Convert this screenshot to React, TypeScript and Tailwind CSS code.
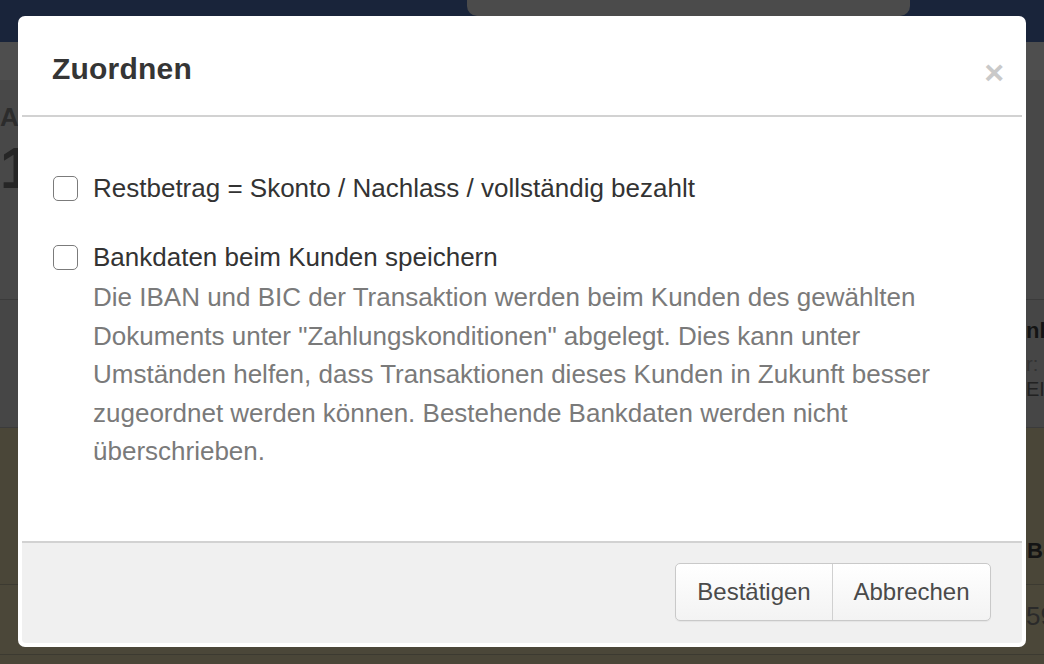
export default function App() {
  const font = { fontFamily: '"Liberation Sans", Arial, Helvetica, sans-serif' };

  return (
    <div className="relative w-[1044px] h-[664px] overflow-hidden bg-[#4a4638]" style={font}>
      {/* page behind the overlay */}
      <div className="flex flex-col">
        <div className="h-[42px] bg-[#19243a]">
          <div className="ml-[467px] w-[443px] h-[16px] bg-[#4b4b4b] rounded-b-[10px]" />
        </div>
        <div className="h-[38px] bg-[#4e4e4e]" />
        <div className="h-[220px] bg-[#484848] border-b border-[#3b3b3b] flex flex-col">
          <span className="mt-[26px] text-[26px] leading-[22px] font-bold text-[#2c2c2c]">A</span>
          <span className="mt-[14px] text-[58px] leading-[52px] font-bold text-[#262626]">1</span>
        </div>
        <div className="h-[128px] bg-[#464646] border-b border-[#3b3b3b] flex">
          <div className="ml-[1026px] flex flex-col whitespace-nowrap">
            <span className="mt-[20px] text-[22px] leading-[22px] font-bold text-[#141414]">nl</span>
            <span className="mt-[12px] text-[20px] leading-[20px] text-[#333]">r:</span>
            <span className="mt-[5px] text-[20px] leading-[20px] text-[#222]">EI</span>
          </div>
        </div>
        <div className="h-[157px] bg-[#4a4638] border-b border-[#3c3a31] flex">
          <span className="ml-[1027px] mt-[112px] text-[22px] leading-[22px] font-bold text-[#141414] whitespace-nowrap">
            Be
          </span>
        </div>
        <div className="h-[70px] bg-[#4b4739] border-b border-[#3c3a31] flex">
          <span className="ml-[1026px] mt-[18px] text-[26px] leading-[26px] text-[#2a2a2a] whitespace-nowrap">
            59
          </span>
        </div>
      </div>

      {/* modal */}
      <div className="absolute left-[18px] top-[16px] w-[1008px] h-[631px] bg-white rounded-[7px] p-[4px] flex flex-col">
        <div className="h-[97px] shrink-0 border-b-2 border-[#d2d2d2] flex items-center justify-between pl-[30px] pr-[18px]">
          <h1 className="text-[30px] font-bold text-[#353535] mt-[2px] tracking-[0.2px]">Zuordnen</h1>
          <span className="text-[34px] leading-none font-bold text-[#c9c9c9] mt-[8px]">×</span>
        </div>

        <div className="flex-1 pl-[31px] pt-[52px]">
          <label className="flex items-start">
            <span className="mt-[7px] w-[25px] h-[25px] shrink-0 rounded-[5px] border-[1.5px] border-[#7b7b7b] bg-white" />
            <span className="ml-[15px] text-[26px] leading-[38.5px] text-[#333]">
              Restbetrag = Skonto / Nachlass / vollständig bezahlt
            </span>
          </label>

          <label className="flex items-start mt-[30px]">
            <span className="mt-[7px] w-[25px] h-[25px] shrink-0 rounded-[5px] border-[1.5px] border-[#7b7b7b] bg-white" />
            <div className="ml-[15px] w-[870px]">
              <div className="text-[26px] leading-[38.5px] text-[#333]">Bankdaten beim Kunden speichern</div>
              <p className="mt-[2px] text-[26px] leading-[38.6px] text-[#7a7a7a]">
                Die IBAN und BIC der Transaktion werden beim Kunden des gewählten Dokuments unter
                "Zahlungskonditionen" abgelegt. Dies kann unter Umständen helfen, dass Transaktionen dieses
                Kunden in Zukunft besser zugeordnet werden können. Bestehende Bankdaten werden nicht
                überschrieben.
              </p>
            </div>
          </label>
        </div>

        <div className="h-[102px] shrink-0 bg-[#f0f0f0] border-t-2 border-[#d2d2d2] rounded-b-[4px] flex justify-end items-start pt-[20px] pr-[31px]">
          <div className="flex h-[58px] rounded-[5px] border border-[#c9c9c9] bg-gradient-to-b from-white to-[#f3f3f3] shadow-[0_1px_1px_rgba(0,0,0,0.05)]">
            <button className="w-[156px] text-[24px] text-[#4a4a4a]">Bestätigen</button>
            <button className="w-[158px] border-l border-[#d0d0d0] text-[24px] text-[#4a4a4a]">Abbrechen</button>
          </div>
        </div>
      </div>
    </div>
  );
}
